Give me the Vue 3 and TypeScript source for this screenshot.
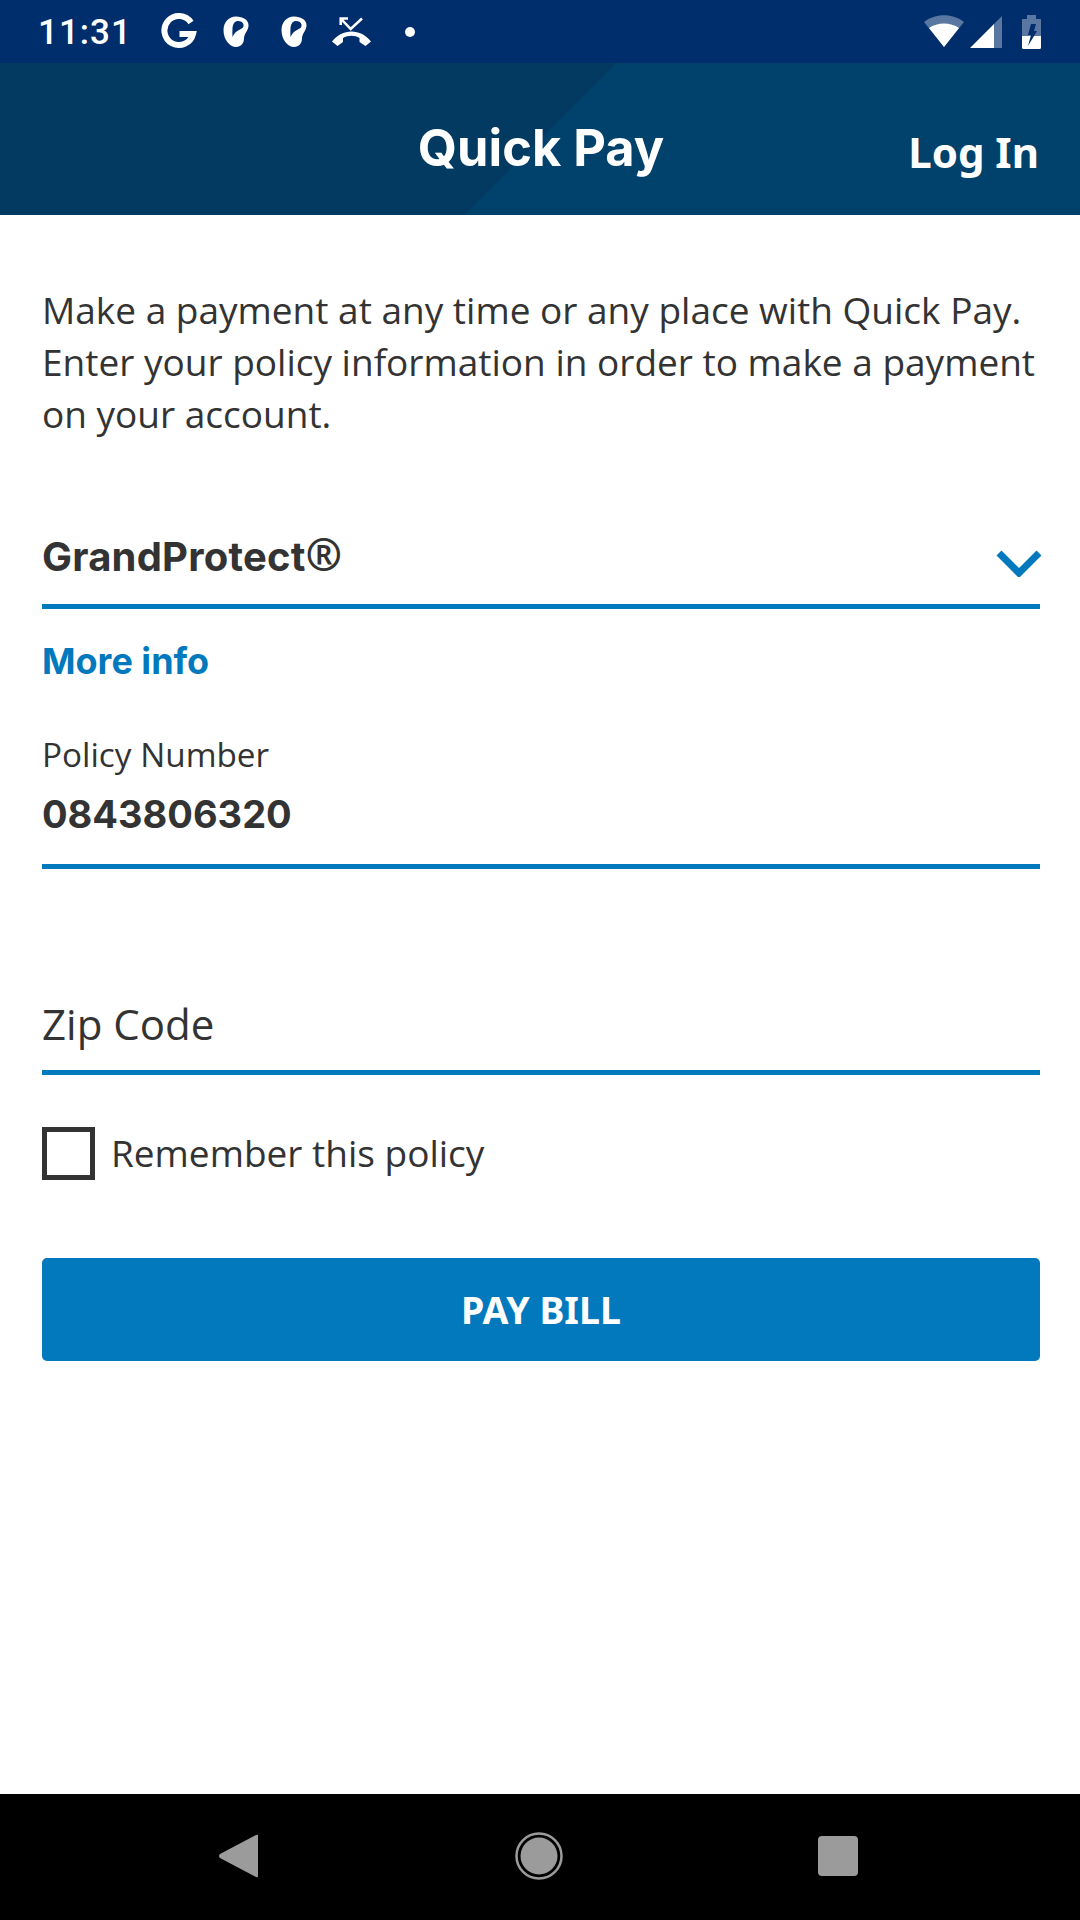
<script setup lang="ts">
const intro = 'Make a payment at any time or any place with Quick Pay. Enter your policy information in order to make a payment on your account.'
</script>

<template>
  <div class="screen">
    <div class="status">
      <div class="status-left">
        <span class="time">11:31</span>
        <svg class="ic-g" width="38" height="38" viewBox="0 0 38 38"><path d="M31 9.500A14.500 14.500 0 1 0 33 21H19.500" fill="none" stroke="#fff" stroke-width="6"/></svg>
        <svg class="ic-ear" width="26" height="32" viewBox="0 0 26 32"><path fill-rule="evenodd" fill="#fff" d="M13 .5C20 .5 26 4 25.500 10C25 15 21.500 17 21 22C21 27.500 18 31 13 31C7 31 .5 24 .5 14C.5 6 6 .5 13 .5ZM15 5C12 5 10 7.500 9.500 12C9.300 15 9.300 18 9.500 21C11 17.500 13 15.500 16 14C19.500 12.500 21 11 20.500 8.500C20 6 17.500 5 15 5Z"/></svg>
        <svg class="ic-ear second" width="26" height="32" viewBox="0 0 26 32"><path fill-rule="evenodd" fill="#fff" d="M13 .5C20 .5 26 4 25.500 10C25 15 21.500 17 21 22C21 27.500 18 31 13 31C7 31 .5 24 .5 14C.5 6 6 .5 13 .5ZM15 5C12 5 10 7.500 9.500 12C9.300 15 9.300 18 9.500 21C11 17.500 13 15.500 16 14C19.500 12.500 21 11 20.500 8.500C20 6 17.500 5 15 5Z"/></svg>
        <svg class="ic-call" width="40" height="32" viewBox="0 0 40 32"><path d="M16 2.500H8.700V9M9 2.800L18.700 13L30 2.500" fill="none" stroke="#fff" stroke-width="2.500"/><path fill="#fff" d="M0 25.500C10 12 29 12 39 25.500L33.500 30L27.500 26V22C23 19 16 19 11 22V26L5.500 30Z"/></svg>
        <span class="dot"></span>
      </div>
      <div class="status-right">
        <svg width="40" height="33" viewBox="0 0 40 33"><path fill="#fff" fill-opacity=".35" d="M0 7C11-2 29-2 40 7L20 32Z"/><path fill="#fff" d="M5 13C13 7 27 7 35 13L20 32Z"/></svg>
        <svg class="ic-signal" width="32" height="32" viewBox="0 0 32 32"><path fill="#fff" fill-opacity=".35" d="M32 0V32H24V8Z"/><path fill="#fff" d="M24 8V32H0Z"/></svg>
        <svg class="ic-batt" width="19" height="34" viewBox="0 0 19 34"><path fill="#fff" fill-opacity=".35" d="M5 0H14V4H19V21H0V4H5Z"/><path fill="#fff" d="M0 21H19V32.500Q19 34 17.500 34H1.500Q0 34 0 32.500Z"/><path fill="#002e6d" d="M9 9H14L12 16H15L6 31L9 20H6Z"/></svg>
      </div>
    </div>

    <header class="appbar">
      <h1 class="title">Quick Pay</h1>
      <a class="login">Log In</a>
    </header>

    <main class="content">
      <p class="intro">{{ intro }}</p>

      <div class="select">
        <span class="select-value">GrandProtect<span class="reg">®</span></span>
        <svg class="chevron" width="46" height="28" viewBox="0 0 46 28"><path d="M3 4L23 24L43 4" fill="none" stroke="#0279bd" stroke-width="7"/></svg>
      </div>
      <a class="more">More info</a>

      <div class="field policy">
        <label class="field-label">Policy Number</label>
        <div class="field-value">0843806320</div>
      </div>

      <div class="field zip">
        <span class="placeholder">Zip Code</span>
      </div>

      <label class="remember">
        <span class="box"></span>
        <span class="remember-text">Remember this policy</span>
      </label>

      <button class="pay">PAY BILL</button>
    </main>

    <nav class="navbar">
      <svg width="40" height="44" viewBox="0 0 40 44"><path fill="#9b9b9b" d="M37 1Q39 0 39 2V42Q39 44 37 43L1 24Q-1 22 1 20Z"/></svg>
      <svg width="48" height="48" viewBox="0 0 48 48"><circle cx="24" cy="24" r="22.500" fill="none" stroke="#9b9b9b" stroke-width="2.500"/><circle cx="24" cy="24" r="18.500" fill="#9b9b9b"/></svg>
      <span class="stop"></span>
    </nav>
  </div>
</template>

<style scoped>
.screen {
  width: 1080px;
  height: 1920px;
  display: flex;
  flex-direction: column;
  background: #fff;
  color: #333;
  font-family: "Open Sans", sans-serif;
  overflow: hidden;
}
.status {
  height: 63px;
  flex: none;
  background: #002e6d;
  display: flex;
  align-items: center;
  justify-content: space-between;
  padding: 0 39px 0 38px;
  box-sizing: border-box;
  color: #fff;
}
.status-left, .status-right { display: flex; align-items: center; }
.time {
  font-family: Roboto, sans-serif;
  font-size: 35px;
  font-weight: 500;
  letter-spacing: 1px;
  width: 122px;
  margin-top: 2px;
}
.ic-g { margin-right: 25px; }
.ic-ear { margin-right: 32px; }
.ic-ear.second { margin-right: 25px; }
.ic-call { margin-right: 33px; }
.dot { width: 10px; height: 10px; border-radius: 50%; background: #fff; }
.ic-signal { margin-left: 6px; margin-right: 20px; }
.appbar {
  height: 152px;
  flex: none;
  position: relative;
  display: flex;
  align-items: center;
  justify-content: flex-end;
  padding-right: 41px;
  box-sizing: border-box;
  color: #fff;
  background: linear-gradient(135deg, #033a62 0, #033a62 436px, #01426c 436px, #01426c 100%);
}
.title {
  position: absolute;
  left: 2px;
  right: 0;
  top: 57px;
  margin: 0;
  text-align: center;
  font-family: Inter, sans-serif;
  font-size: 50.5px;
  line-height: 56px;
  font-weight: 700;
}
.login {
  font-family: "Noto Sans", sans-serif;
  font-size: 42px;
  font-weight: 700;
  line-height: 56px;
  margin-top: 26px;
}
.content {
  flex: 1;
  padding: 0 40px 0 42px;
}
.intro {
  margin: 0;
  padding-top: 69px;
  font-size: 37px;
  line-height: 52px;
  width: 1020px;
}
.select {
  margin-top: 65px;
  height: 104px;
  box-sizing: border-box;
  border-bottom: 5px solid #0279bd;
  display: flex;
  align-items: center;
  justify-content: space-between;
}
.select-value {
  font-family: Inter, sans-serif;
  font-size: 40px;
  font-weight: 700;
  letter-spacing: .2px;
  line-height: 50px;
  margin-top: 4px;
}
.reg { font-family: "Open Sans", sans-serif; font-size: 44px; font-weight: 700; line-height: 44px; }
.chevron { margin-top: 16px; margin-right: -2px; }
.more {
  display: block;
  margin-top: 28px;
  font-family: Inter, sans-serif;
  font-size: 36px;
  font-weight: 700;
  line-height: 48px;
  color: #0279bd;
}
.field { border-bottom: 5px solid #0279bd; box-sizing: border-box; }
.policy { margin-top: 46px; height: 138px; }
.field-label { display: block; font-size: 33.3px; line-height: 46px; }
.field-value {
  font-family: Inter, sans-serif;
  font-size: 38px;
  font-weight: 700;
  line-height: 50px;
  margin-top: 12px;
}
.zip { margin-top: 92px; height: 114px; display: flex; align-items: flex-end; padding-bottom: 18px; }
.placeholder { font-size: 42px; line-height: 56px; }
.remember { display: flex; align-items: center; margin-top: 52px; gap: 16px; }
.box { width: 53px; height: 53px; box-sizing: border-box; border: 5px solid #333; }
.remember-text { font-size: 37px; line-height: 53px; margin-top: -2px; }
.pay {
  display: block;
  width: 998px;
  height: 103px;
  margin-top: 78px;
  border: 0;
  border-radius: 5px;
  background: #0279bd;
  color: #fff;
  font-family: "Noto Sans", sans-serif;
  font-size: 37.500px;
  font-weight: 700;
}
.navbar {
  height: 126px;
  flex: none;
  background: #000;
  display: flex;
  align-items: center;
  justify-content: space-between;
  padding: 0 222px 2px 219px;
  box-sizing: border-box;
}
.stop { width: 40px; height: 40px; border-radius: 4px; background: #9b9b9b; }
</style>
